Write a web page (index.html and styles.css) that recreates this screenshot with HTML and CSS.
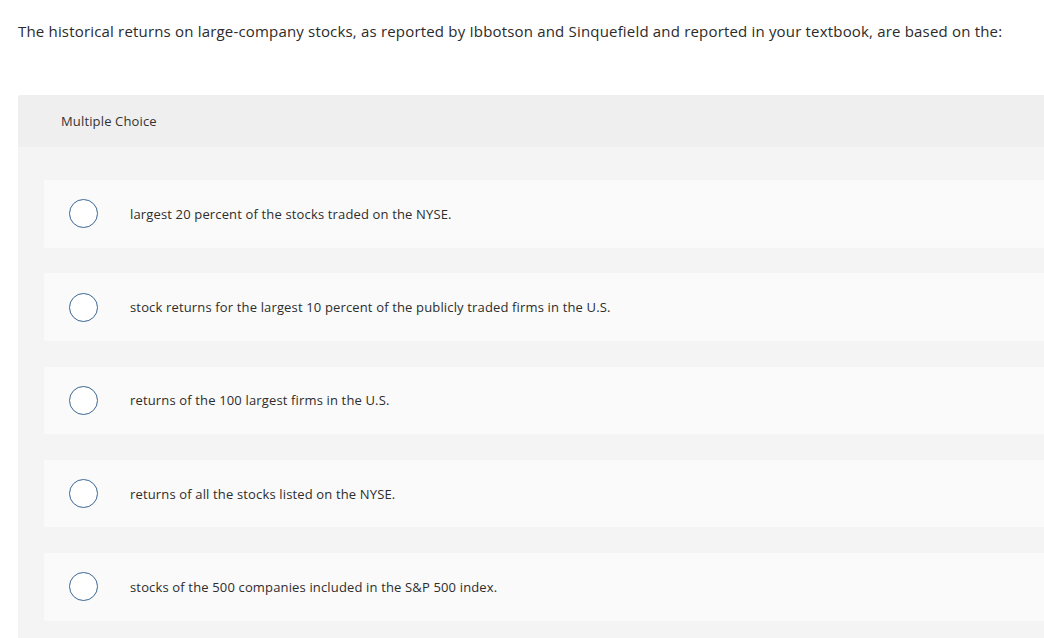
FILE: index.html
```html
<!DOCTYPE html>
<html lang="en">
<head>
<meta charset="utf-8">
<link rel="stylesheet" href="styles.css">
</head>
<body>
<main class="page">
  <p class="question">The historical returns on large-company stocks, as reported by Ibbotson and Sinquefield and reported in your textbook, are based on the:</p>
  <section class="panel">
    <header class="panel-head">Multiple Choice</header>
    <div class="choices">
      <label class="choice"><span class="radio"></span><span class="choice-text">largest 20 percent of the stocks traded on the NYSE.</span></label>
      <label class="choice"><span class="radio"></span><span class="choice-text">stock returns for the largest 10 percent of the publicly traded firms in the U.S.</span></label>
      <label class="choice"><span class="radio"></span><span class="choice-text">returns of the 100 largest firms in the U.S.</span></label>
      <label class="choice"><span class="radio"></span><span class="choice-text">returns of all the stocks listed on the NYSE.</span></label>
      <label class="choice"><span class="radio"></span><span class="choice-text">stocks of the 500 companies included in the S&amp;P 500 index.</span></label>
    </div>
  </section>
</main>
</body>
</html>
```
FILE: styles.css
```css
html, body {
  margin: 0;
  padding: 0;
  background: #ffffff;
}
body {
  font-family: "Open Sans", "Liberation Sans", sans-serif;
  color: #2d2d2d;
  overflow: hidden;
}
.page {
  padding: 20px 0 0 18px;
}
.question {
  margin: 0;
  font-size: 15px;
  line-height: 22px;
  letter-spacing: 0.18px;
  color: #2b2b2b;
}
.panel {
  margin-top: 53px;
  background: #f4f4f4;
  border-radius: 3px 0 0 0;
  padding-bottom: 40px;
}
.panel-head {
  background: #efefef;
  height: 52px;
  display: flex;
  align-items: center;
  padding-left: 43px;
  font-size: 13px;
  letter-spacing: 0.15px;
  color: #333;
  border-radius: 3px 0 0 0;
}
.choices {
  display: flex;
  flex-direction: column;
  gap: 25.75px;
  padding: 33px 0 0 26px;
}
.choice {
  display: flex;
  align-items: center;
  height: 67.5px;
  background: #fafafa;
  border-radius: 3px 0 0 3px;
}
.radio {
  box-sizing: border-box;
  width: 29px;
  height: 29px;
  border: 1.5px solid #3a6691;
  border-radius: 50%;
  background: #fff;
  margin-left: 25px;
  flex: none;
}
.choice-text {
  margin-left: 32px;
  font-size: 13px;
  letter-spacing: 0.15px;
  color: #2d2d2d;
}
```
